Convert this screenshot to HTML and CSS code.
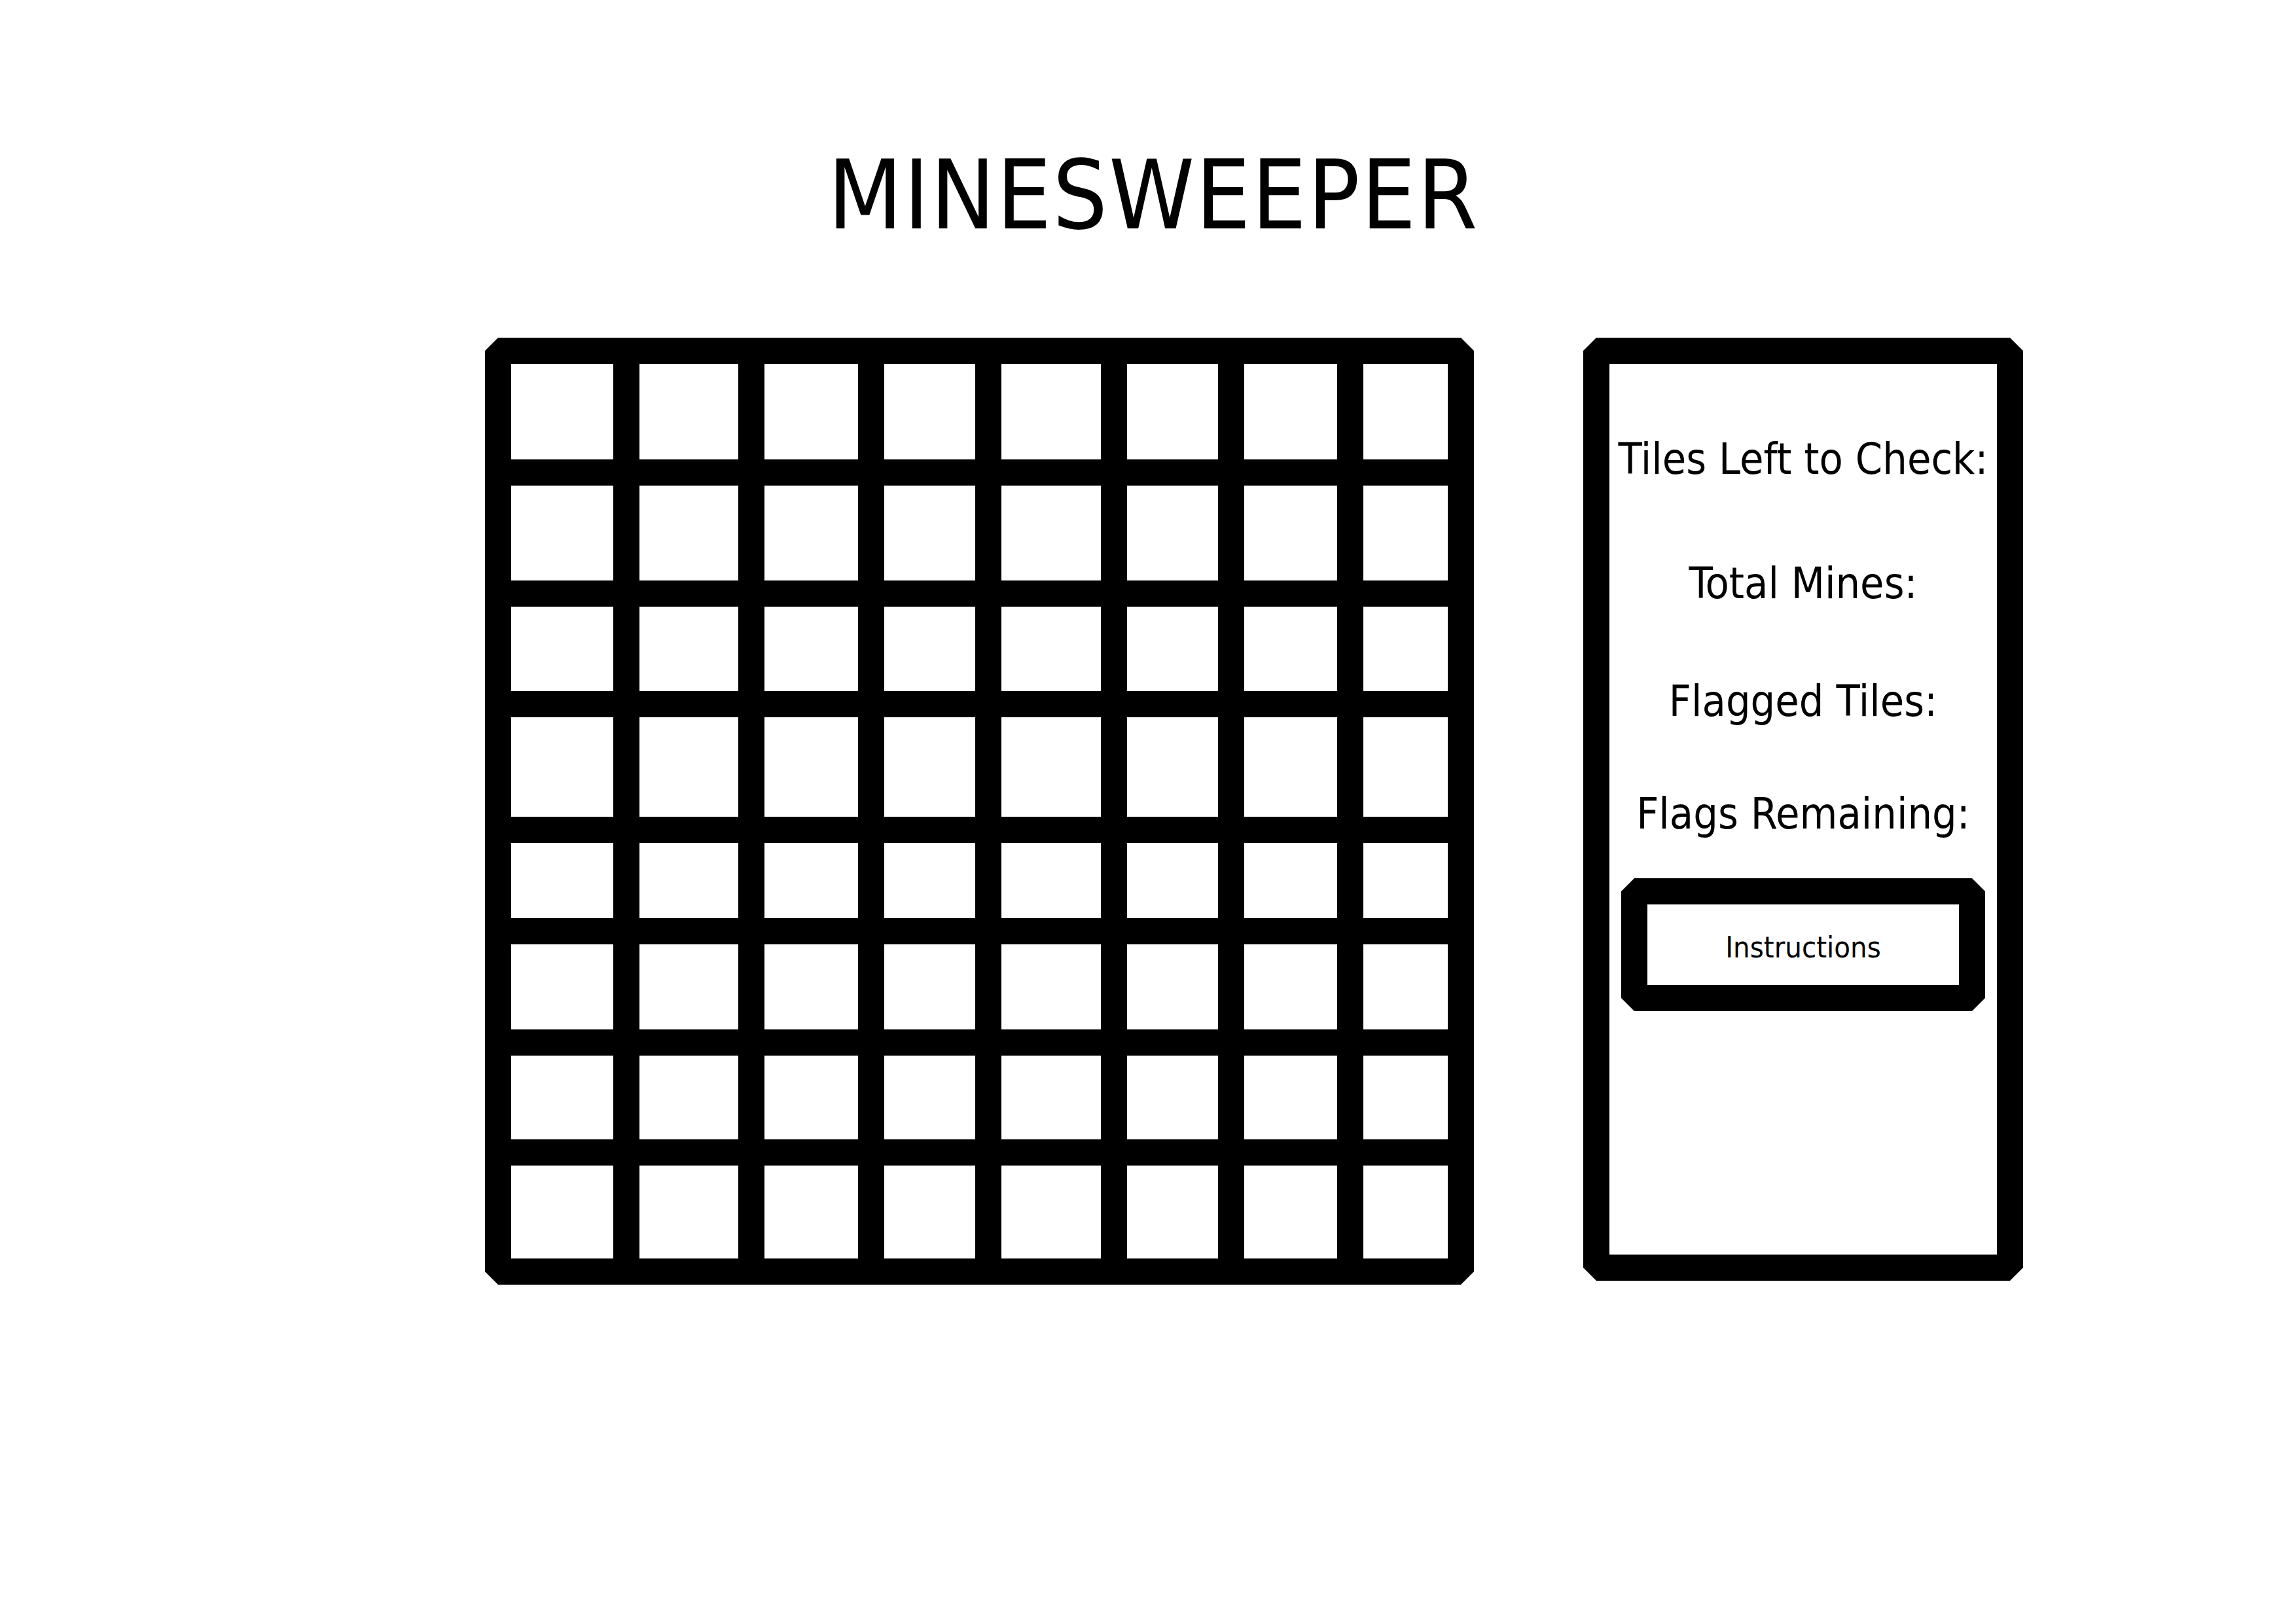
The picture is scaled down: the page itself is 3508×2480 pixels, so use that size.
FILE: index.html
```html
<!DOCTYPE html>
<html lang="en">
<head>
<meta charset="utf-8"/>
<title>Minesweeper</title>
<link rel="stylesheet" href="styles.css">
</head>
<body>
<h1 class="title">MINESWEEPER</h1>
<div class="game">
  <div class="board" id="board"></div>
  <div class="panel">
    <div class="stat">Tiles Left to Check:</div>
    <div class="stat">Total Mines:</div>
    <div class="stat">Flagged Tiles:</div>
    <div class="stat">Flags Remaining:</div>
    <div class="btn-instructions">Instructions</div>
  </div>
</div>
<script>
  const board = document.getElementById("board");
  for (let i = 0; i < 64; i++) {
    const tile = document.createElement("div");
    tile.className = "tile";
    board.appendChild(tile);
  }
</script>
</body>
</html>
```

FILE: styles.css
```css
body {
  margin: 0;
  background: #fff;
  color: #000;
  font-family: "DejaVu Sans Condensed", "DejaVu Sans", sans-serif;
  font-stretch: condensed;
}
.title {
  margin: 0;
  padding-top: 211px;
  padding-left: 16px;
  font-size: 147px;
  font-weight: normal;
  letter-spacing: 2px;
  line-height: 175px;
  text-align: center;
}
.game {
  display: flex;
  align-items: flex-start;
  gap: 167px;
  margin-top: 130px;
  padding-left: 741px;
}
.board {
  display: grid;
  grid-template-columns: 156px 151px 143px 139px 152px 139px 142px 129px;
  grid-template-rows: 146px 145px 129px 152px 115px 130px 128px 142px;
  gap: 40px;
  padding: 40px;
  background: #000;
  clip-path: polygon(20px 0, calc(100% - 20px) 0, 100% 20px, 100% calc(100% - 20px), calc(100% - 20px) 100%, 20px 100%, 0 calc(100% - 20px), 0 20px);
}
.tile {
  background: #fff;
}
.panel {
  box-sizing: border-box;
  width: 672px;
  height: 1441px;
  border: 40px solid #000;
  padding-top: 106px;
  display: flex;
  flex-direction: column;
  align-items: center;
  clip-path: polygon(20px 0, calc(100% - 20px) 0, 100% 20px, 100% calc(100% - 20px), calc(100% - 20px) 100%, 20px 100%, 0 calc(100% - 20px), 0 20px);
}
.stat {
  font-size: 66px;
  line-height: 80px;
  white-space: nowrap;
}
.stat:nth-child(2) {
  margin-top: 110px;
}
.stat:nth-child(3) {
  margin-top: 100px;
}
.stat:nth-child(4) {
  margin-top: 92px;
}
.btn-instructions {
  box-sizing: border-box;
  width: 556px;
  height: 203px;
  margin-top: 58px;
  padding-top: 8px;
  border: 40px solid #000;
  display: flex;
  align-items: center;
  justify-content: center;
  font-size: 45px;
  cursor: pointer;
  clip-path: polygon(20px 0, calc(100% - 20px) 0, 100% 20px, 100% calc(100% - 20px), calc(100% - 20px) 100%, 20px 100%, 0 calc(100% - 20px), 0 20px);
}
```
